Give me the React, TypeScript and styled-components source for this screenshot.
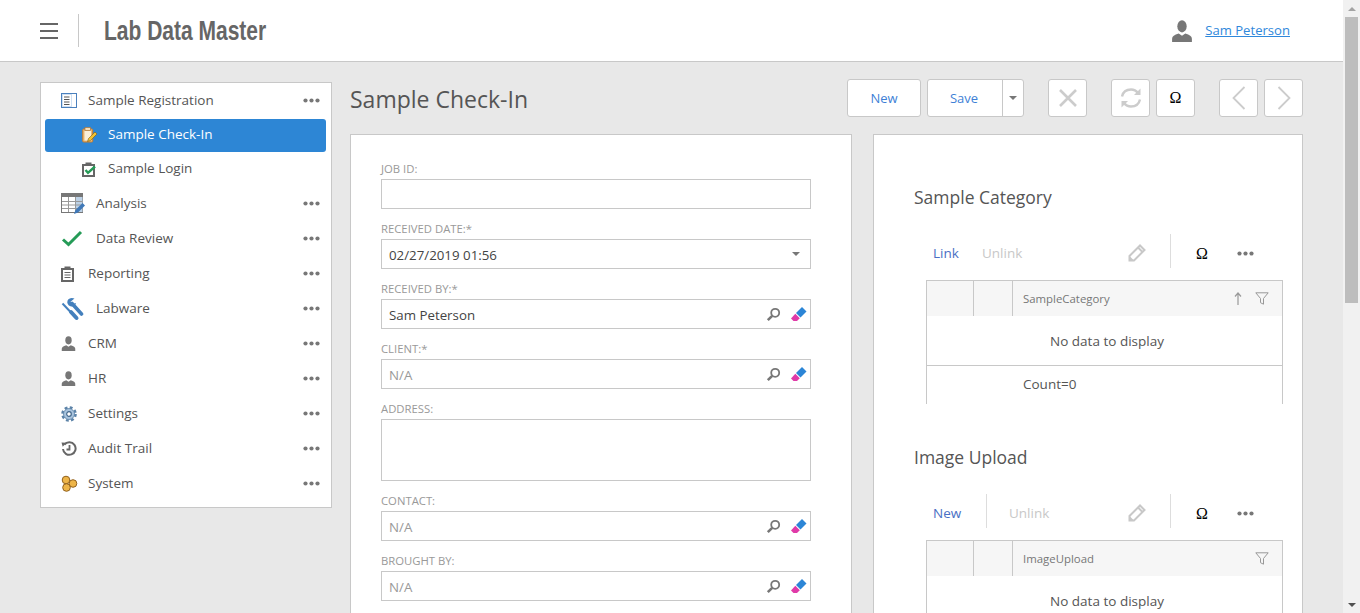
import React from "react";
import styled, {createGlobalStyle, css} from "styled-components";

const GlobalStyle = createGlobalStyle`
  html, body {
    margin: 0;
    height: 100%;
    overflow: hidden;
    font-family: "Open Sans", "Noto Sans", "Liberation Sans", sans-serif;
    font-size: 14px;
    color: #555;
  }

  * {
    box-sizing: border-box;
  }
`

const Omega = styled.span`
  font-family: "Liberation Serif", serif;
  font-size: 16px;
  font-weight: 400;
  color: #000;
`

const Dots = () => (
    <svg width="17" height="5" viewBox="0 0 17 5">
        <circle cx="2.5" cy="2.5" r="2.1" fill="#777"/>
        <circle cx="8.5" cy="2.5" r="2.1" fill="#777"/>
        <circle cx="14.5" cy="2.5" r="2.1" fill="#777"/>
    </svg>
)

const PersonIcon = ({size = 15}: { size?: number }) => (
    <svg width={size} height={size} viewBox="0 0 16 16">
        <ellipse cx="8" cy="4.6" rx="3.4" ry="4.4" fill="#777"/>
        <path d="M.8 16v-2.4c0-1.8 1.6-2.8 4.8-3.8L8 11.4l2.4-1.600c3.200 1 4.800 2 4.800 3.800V16z" fill="#777"/>
    </svg>
)

const icons: Record<string, React.ReactNode> = {
    registration: (
        <svg width="16" height="16" viewBox="0 0 16 16">
            <rect x=".5" y=".5" width="15" height="14" fill="#cfe0f2" stroke="#4a80bd"/>
            <rect x="2" y="2" width="8" height="11" fill="#fff"/>
            <rect x="11" y="1" width="4" height="13" fill="#fff"/>
            <path d="M3 4h5.500M3 6.500h5.500M3 9h5.500M3 11.500h5.500" stroke="#555"/>
        </svg>
    ),
    checkIn: (
        <svg width="16" height="16" viewBox="0 0 16 16">
            <rect x=".7" y="2" width="10" height="13" rx="1" fill="#e8b878" stroke="#c77f2e"/>
            <rect x="3" y=".5" width="5.500" height="3" fill="#f4ddb8" stroke="#a9763a" strokeWidth=".7"/>
            <rect x="2.500" y="4" width="6.500" height="9.500" fill="#f9efd9"/>
            <path d="M5.500 14.500l1-3 6.500-6.500 2 2-6.500 6.500z" fill="#f2c230" stroke="#7a5a1a" strokeWidth=".6"/>
        </svg>
    ),
    login: (
        <svg width="14" height="15" viewBox="0 0 14 15">
            <path d="M1 3h11v11H1z" fill="#fff" stroke="#666" strokeWidth="2"/>
            <rect x="3.500" y=".5" width="6" height="3" fill="#666"/>
            <path d="M3.500 8l2.500 2.800L13 4.500" fill="none" stroke="#259b57" strokeWidth="2.400"/>
        </svg>
    ),
    analysis: (
        <svg width="25" height="22" viewBox="0 0 25 22">
            <rect x=".5" y=".5" width="21" height="19" fill="#fff" stroke="#777"/>
            <rect x="1" y="1" width="20" height="3" fill="#777"/>
            <rect x="15" y="4" width="6.500" height="15" fill="#bcd1e6"/>
            <path d="M1 8.500h20M1 12h20M1 15.500h20M7.500 4v15M14.500 4v15" stroke="#999"/>
            <path d="M13 21l1.500-4 7-7 2.500 2.500-7 7z" fill="#3f78b8"/>
        </svg>
    ),
    review: (
        <svg width="22" height="17" viewBox="0 0 22 17">
            <path d="M2 9.500l5.500 5L20 2" fill="none" stroke="#259b57" strokeWidth="3"/>
        </svg>
    ),
    reporting: (
        <svg width="13" height="16" viewBox="0 0 13 16">
            <path d="M1 3h11v12H1z" fill="#fff" stroke="#666" strokeWidth="2"/>
            <rect x="3.500" y=".5" width="6" height="3" fill="#666"/>
            <path d="M3.500 6.500h6M3.500 9h6M3.500 11.500h6" stroke="#666" strokeWidth="1.200"/>
        </svg>
    ),
    labware: (
        <svg width="23" height="24" viewBox="0 0 23 24">
            <path d="M11 6.500L20.500 17" fill="none" stroke="#4480bd" strokeWidth="3.600" strokeLinecap="round"/>
            <path d="M13.500 1.500c-2.500-1.200-6-.6-7 2.200-.8 2.300.5 4.800 3 5.600 2.600.8 5-.7 5.500-3.300l-3 1-2.500-2.300z" fill="#4480bd"/>
            <path d="M1.500 6.500l8 8.500" fill="none" stroke="#4480bd" strokeWidth="2"/>
            <path d="M10 15l5.500 6" fill="none" stroke="#4480bd" strokeWidth="4" strokeLinecap="round"/>
        </svg>
    ),
    settings: (
        <svg width="16" height="16" viewBox="0 0 16 16">
            <circle cx="8" cy="8" r="6.500" fill="none" stroke="#5c83a8" strokeWidth="2.600" strokeDasharray="2.800 2.300"/>
            <circle cx="8" cy="8" r="5.500" fill="#a8c3dd" stroke="#5c83a8" strokeWidth=".8"/>
            <circle cx="8" cy="8" r="2.300" fill="#fff" stroke="#44688c" strokeWidth="1.200"/>
        </svg>
    ),
    audit: (
        <svg width="16" height="16" viewBox="0 0 16 16">
            <path d="M3.400 3.500A6.300 6.300 0 1 1 2 8" fill="none" stroke="#666" strokeWidth="2"/>
            <path d="M.5 1.500l5 .3-3.800 4z" fill="#666"/>
            <path d="M8.500 4v4.500H5.500" fill="none" stroke="#666" strokeWidth="1.800"/>
        </svg>
    ),
    system: (
        <svg width="17" height="17" viewBox="0 0 17 17">
            <circle cx="5" cy="5" r="3.800" fill="#eeb548" stroke="#91601c"/>
            <circle cx="12" cy="8.500" r="3.800" fill="#eeb548" stroke="#91601c"/>
            <circle cx="5.500" cy="12.500" r="3.800" fill="#eeb548" stroke="#91601c"/>
        </svg>
    ),
}

const navItems = [
    {label: "Sample Registration", icon: icons.registration, height: 35, textAt: 47, lift: 2},
    {label: "Sample Check-In", icon: icons.checkIn, height: 33, textAt: 67, child: true, active: true, lift: 2},
    {label: "Sample Login", icon: icons.login, height: 34, textAt: 67, child: true},
    {label: "Analysis", icon: icons.analysis, height: 35, textAt: 55},
    {label: "Data Review", icon: icons.review, height: 35, textAt: 55},
    {label: "Reporting", icon: icons.reporting, height: 35, textAt: 47},
    {label: "Labware", icon: icons.labware, height: 35, textAt: 55},
    {label: "CRM", icon: <PersonIcon/>, height: 35, textAt: 47},
    {label: "HR", icon: <PersonIcon/>, height: 35, textAt: 47},
    {label: "Settings", icon: icons.settings, height: 35, textAt: 47},
    {label: "Audit Trail", icon: icons.audit, height: 35, textAt: 47},
    {label: "System", icon: icons.system, height: 35, textAt: 47},
]

const LookupIcons = () => (
    <FieldIcons>
        <svg width="15" height="15" viewBox="0 0 15 15">
            <circle cx="9.200" cy="5.800" r="4" fill="none" stroke="#777" strokeWidth="1.800"/>
            <path d="M6.200 8.800L1.800 13.200" stroke="#777" strokeWidth="2.600"/>
        </svg>
        <svg width="17" height="16" viewBox="0 0 17 16">
            <path d="M6 7l6-6 4.500 4.500-6 6z" fill="#2b85d6"/>
            <path d="M5.300 7.700l4.500 4.500L7 15H3.500L1 12.500z" fill="#e03aa8"/>
        </svg>
    </FieldIcons>
)

const Field: React.FC<{ label: string, value?: string, muted?: boolean, lookup?: boolean, date?: boolean, tall?: boolean }> =
    ({label, value, muted, lookup, date, tall}) => (
        <FieldWrapper>
            <FieldLabel>{label}</FieldLabel>
            <FieldBox $tall={tall}>
                <FieldValue $muted={muted}>{value}</FieldValue>
                {lookup && <LookupIcons/>}
                {date && <Caret/>}
            </FieldBox>
        </FieldWrapper>
    )

const PencilIcon = () => (
    <svg width="18" height="18" viewBox="0 0 18 18">
        <path d="M1.500 16.500v-4.500L12 1.500 16.500 6 6 16.500z" fill="#fff" stroke="#c8c8c8" strokeWidth="2"/>
        <path d="M10 3.500L14.500 8" stroke="#c8c8c8" strokeWidth="2"/>
        <path d="M1.500 16.500v-4.500L6 16.500z" fill="#c8c8c8"/>
    </svg>
)

const FilterIcon = () => (
    <svg width="14" height="13" viewBox="0 0 14 13">
        <path d="M.8.800h12.400L8.500 6.500v5.700l-3-1.500V6.500z" fill="none" stroke="#999"/>
    </svg>
)

const GridSection: React.FC<{ title: string, first: string, divider?: boolean, column: string, sort?: boolean, count?: boolean }> =
    ({title, first, divider, column, sort, count}) => (
        <Section>
            <SectionTitle>{title}</SectionTitle>
            <GridToolbar>
                <GridAction $wide={divider}>{first}</GridAction>
                {divider && <ToolbarDivider/>}
                <GridAction $disabled $wide={divider}>Unlink</GridAction>
                <PencilSlot><PencilIcon/></PencilSlot>
                <ToolbarDivider/>
                <OmegaSlot><Omega>Ω</Omega></OmegaSlot>
                <Dots/>
            </GridToolbar>
            <Grid>
                <GridHead>
                    <HeadCell $width={47}/>
                    <HeadCell $width={39}/>
                    <HeadTitle>{column}</HeadTitle>
                    {sort && (
                        <svg width="10" height="14" viewBox="0 0 10 14">
                            <path d="M5 1v12M2 4.500L5 1l3 3.500" fill="none" stroke="#999" strokeWidth="1.200"/>
                        </svg>
                    )}
                    <FilterSlot><FilterIcon/></FilterSlot>
                </GridHead>
                <NoData>No data to display</NoData>
                {count && <GridFooter>Count=0</GridFooter>}
            </Grid>
        </Section>
    )

const App: React.FC = () => {
    return (
        <>
            <GlobalStyle/>
            <PageFrame>
                <Main>
                    <TopBar>
                        <BurgerButton>
                            <span/><span/><span/>
                        </BurgerButton>
                        <Logo>Lab Data Master</Logo>
                        <UserBox>
                            <PersonIcon size={22}/>
                            <UserLink href="#">Sam Peterson</UserLink>
                        </UserBox>
                    </TopBar>
                    <Content>
                        <NavPanel>
                            {navItems.map(item => (
                                <NavRow key={item.label} $height={item.height} $active={item.active} $lift={item.lift}>
                                    <NavIcon $child={item.child} $textAt={item.textAt}>{item.icon}</NavIcon>
                                    <NavLabel>{item.label}</NavLabel>
                                    {!item.child && <Dots/>}
                                </NavRow>
                            ))}
                        </NavPanel>
                        <Workspace>
                            <HeaderRow>
                                <PageTitle>Sample Check-In</PageTitle>
                                <Toolbar>
                                    <TextButton $width={74}>New</TextButton>
                                    <SplitButton>
                                        <SplitMain>Save</SplitMain>
                                        <SplitArrow><Caret/></SplitArrow>
                                    </SplitButton>
                                    <IconButton $gapLeft={24}>
                                        <svg width="20" height="20" viewBox="0 0 20 20">
                                            <path d="M2 2l16 16M18 2L2 18" stroke="#ccc" strokeWidth="2.600"/>
                                        </svg>
                                    </IconButton>
                                    <IconButton $gapLeft={24}>
                                        <svg width="22" height="22" viewBox="0 0 22 22">
                                            <path d="M2 9.500C3 5 6.500 2.500 11 2.500c3 0 5.500 1.500 7 3.500" fill="none" stroke="#ccc" strokeWidth="2.400"/>
                                            <path d="M20.500 1.500V8h-6.500z" fill="#ccc"/>
                                            <path d="M20 12.500c-1 4.500-4.500 7-9 7-3 0-5.500-1.500-7-3.500" fill="none" stroke="#ccc" strokeWidth="2.400"/>
                                            <path d="M1.500 20.500V14H8z" fill="#ccc"/>
                                        </svg>
                                    </IconButton>
                                    <IconButton $gapLeft={6}><Omega>Ω</Omega></IconButton>
                                    <IconButton $gapLeft={24}>
                                        <svg width="14" height="24" viewBox="0 0 14 24">
                                            <path d="M12.500 1L1.500 12l11 11" fill="none" stroke="#ccc" strokeWidth="1.800"/>
                                        </svg>
                                    </IconButton>
                                    <IconButton $gapLeft={6}>
                                        <svg width="14" height="24" viewBox="0 0 14 24">
                                            <path d="M1.500 1l11 11-11 11" fill="none" stroke="#ccc" strokeWidth="1.800"/>
                                        </svg>
                                    </IconButton>
                                </Toolbar>
                            </HeaderRow>
                            <Columns>
                                <FormCard>
                                    <Field label="JOB ID:"/>
                                    <Field label="RECEIVED DATE:*" value="02/27/2019 01:56" date/>
                                    <Field label="RECEIVED BY:*" value="Sam Peterson" lookup/>
                                    <Field label="CLIENT:*" value="N/A" muted lookup/>
                                    <Field label="ADDRESS:" tall/>
                                    <Field label="CONTACT:" value="N/A" muted lookup/>
                                    <Field label="BROUGHT BY:" value="N/A" muted lookup/>
                                </FormCard>
                                <SideCard>
                                    <GridSection title="Sample Category" first="Link" column="SampleCategory" sort count/>
                                    <GridSection title="Image Upload" first="New" column="ImageUpload" divider/>
                                </SideCard>
                            </Columns>
                        </Workspace>
                    </Content>
                </Main>
                <ScrollBar>
                    <ScrollArrow $up/>
                    <ScrollTrack>
                        <ScrollThumb/>
                    </ScrollTrack>
                    <ScrollArrow/>
                </ScrollBar>
            </PageFrame>
        </>
    );
};

export default App;

const PageFrame = styled.div`
  display: flex;
  height: 613px;
  overflow: hidden;
  background-color: #e8e8e8;
`
const Main = styled.div`
  flex: 1;
  min-width: 0;
  overflow: hidden;
`
const TopBar = styled.header`
  display: flex;
  align-items: center;
  height: 62px;
  padding: 0 53px 0 40px;
  background-color: #fff;
  border-bottom: 1px solid #c8c8c8;
`
const BurgerButton = styled.div`
  display: flex;
  flex-direction: column;
  gap: 5px;
  width: 39px;
  height: 33px;
  padding: 9px 20px 0 0;
  border-right: 1px solid #c8c8c8;

  span {
    display: block;
    height: 2px;
    flex: none;
    background-color: #666;
  }
`
const Logo = styled.div`
  margin-left: 25px;
  font-family: "Liberation Sans", sans-serif;
  font-size: 28px;
  font-weight: 700;
  color: #666;
  white-space: nowrap;
  transform: scaleX(0.75);
  transform-origin: left center;
`
const UserBox = styled.div`
  display: flex;
  align-items: center;
  gap: 12px;
  margin-left: auto;
`
const UserLink = styled.a`
  padding-bottom: 2px;
  font-size: 13.1px;
  color: #2f88db;
`
const Content = styled.div`
  display: flex;
  align-items: flex-start;
  padding: 20px 40px 0;
`
const NavPanel = styled.nav`
  flex: none;
  width: 292px;
  height: 426px;
  padding: 1px 5px 0 4px;
  background-color: #fff;
  border: 1px solid #c8c8c8;
`
const NavRow = styled.div<{ $height: number, $active?: boolean, $lift?: number }>`
  display: flex;
  align-items: center;
  height: ${props => props.$height}px;
  padding: 0 6px ${props => props.$lift || 0}px 0;
  border-radius: 3px;
  color: ${props => props.$active ? "#fff" : "#555"};
  background-color: ${props => props.$active ? "#2d86d5" : "transparent"};
`
const NavIcon = styled.span<{ $child?: boolean, $textAt: number }>`
  display: flex;
  align-items: center;
  flex: none;
  width: ${props => props.$textAt - 4}px;
  padding-left: ${props => props.$child ? 37 : 16}px;
`
const NavLabel = styled.span`
  flex: 1;
  padding-bottom: 2px;
  font-size: 13.5px;
`
const Workspace = styled.div`
  flex: 1;
  min-width: 0;
  margin-left: 18px;
`
const HeaderRow = styled.div`
  display: flex;
  align-items: center;
  justify-content: space-between;
  height: 38px;
  margin: -3px 0 0;
`
const PageTitle = styled.h1`
  margin: 0;
  padding-top: 2px;
  font-size: 23px;
  font-weight: 400;
  color: #555;
`
const Toolbar = styled.div`
  display: flex;
  align-items: center;
`
const buttonBase = css`
  display: flex;
  align-items: center;
  justify-content: center;
  height: 38px;
  background-color: #fff;
  border: 1px solid #c8c8c8;
  border-radius: 3px;
`
const TextButton = styled.div<{ $width: number }>`
  ${buttonBase};
  width: ${props => props.$width}px;
  font-size: 13px;
  color: #3e7fd6;
`
const SplitButton = styled.div`
  ${buttonBase};
  width: 97px;
  margin-left: 6px;
  justify-content: flex-start;
`
const SplitMain = styled.span`
  width: 75px;
  height: 100%;
  padding-right: 2px;
  line-height: 36px;
  text-align: center;
  font-size: 13px;
  color: #3e7fd6;
  border-right: 1px solid #c8c8c8;
`
const SplitArrow = styled.span`
  display: flex;
  flex: 1;
  justify-content: center;
`
const IconButton = styled.div<{ $gapLeft: number }>`
  ${buttonBase};
  width: 39px;
  margin-left: ${props => props.$gapLeft}px;
`
const Caret = styled.span`
  width: 0;
  height: 0;
  border-left: 4px solid transparent;
  border-right: 4px solid transparent;
  border-top: 4px solid #777;
`
const Columns = styled.div`
  display: flex;
  gap: 21px;
  margin-top: 17px;
`
const FormCard = styled.div`
  flex: none;
  width: 502px;
  height: 600px;
  padding: 26px 40px 0 30px;
  background-color: #fff;
  border: 1px solid #c8c8c8;
`
const FieldWrapper = styled.div`
  margin-bottom: 12px;
`
const FieldLabel = styled.div`
  height: 18px;
  font-size: 11.3px;
  line-height: 16px;
  color: #999;
`
const FieldBox = styled.div<{ $tall?: boolean }>`
  display: flex;
  align-items: center;
  height: ${props => props.$tall ? 62 : 30}px;
  padding: 0 10px 0 7px;
  border: 1px solid #c8c8c8;
`
const FieldValue = styled.span<{ $muted?: boolean }>`
  flex: 1;
  padding-top: 2px;
  font-size: 13.3px;
  color: ${props => props.$muted ? "#999" : "#444"};
`
const FieldIcons = styled.span`
  display: flex;
  align-items: center;
  gap: 9px;
  margin-right: -7px;
`
const SideCard = styled.div`
  flex: 1;
  min-width: 0;
  height: 600px;
  padding: 50px 19px 0 40px;
  background-color: #fff;
  border: 1px solid #c8c8c8;
`
const Section = styled.section`
  margin-bottom: 41px;
`
const SectionTitle = styled.h2`
  margin: 0;
  height: 36px;
  font-size: 17.5px;
  font-weight: 400;
  color: #555;
`
const GridToolbar = styled.div`
  display: flex;
  align-items: center;
  height: 34px;
  margin-top: 13px;
  padding: 4px 29px 0 19px;
`
const GridAction = styled.span<{ $disabled?: boolean, $wide?: boolean }>`
  width: ${props => props.$wide ? 53 : 49}px;
  font-size: 13.5px;
  color: ${props => props.$disabled ? "#c8c8c8" : "#4a6fc4"};
`
const ToolbarDivider = styled.span`
  flex: none;
  width: 1px;
  height: 34px;
  margin: -4px 22px 0 0;
  background-color: #ddd;
`
const PencilSlot = styled.span`
  display: flex;
  justify-content: flex-end;
  flex: 1;
  padding-right: 24px;
`
const OmegaSlot = styled.span`
  width: 44px;
  padding-left: 3px;
`
const Grid = styled.div`
  margin: 12px 0 0 12px;
  border: 1px solid #c8c8c8;
  border-bottom: none;
`
const GridHead = styled.div`
  display: flex;
  align-items: center;
  height: 35px;
  padding-right: 13px;
  background-color: #f6f6f6;
`
const HeadCell = styled.span<{ $width: number }>`
  align-self: stretch;
  width: ${props => props.$width}px;
  border-right: 1px solid #c8c8c8;
`
const HeadTitle = styled.span`
  flex: 1;
  padding-left: 10px;
  font-size: 11.4px;
  color: #777;
`
const FilterSlot = styled.span`
  display: flex;
  margin-left: 12px;
`
const NoData = styled.div`
  height: 49px;
  padding-left: 5px;
  line-height: 50px;
  text-align: center;
  font-size: 13.5px;
  color: #555;
`
const GridFooter = styled.div`
  height: 39px;
  padding: 9px 0 0 96px;
  font-size: 13.5px;
  color: #555;
  border-top: 1px solid #c8c8c8;
`
const ScrollBar = styled.aside`
  display: flex;
  flex-direction: column;
  flex: none;
  width: 17px;
  background-color: #f1f1f1;
`
const ScrollArrow = styled.span<{ $up?: boolean }>`
  display: flex;
  align-items: center;
  justify-content: center;
  flex: none;
  height: 17px;

  &::before {
    content: "";
    border-left: 4px solid transparent;
    border-right: 4px solid transparent;
    ${props => props.$up ? "border-bottom: 4px solid #a3a3a3;" : "border-top: 4px solid #505050;"}
  }
`
const ScrollTrack = styled.div`
  flex: 1;
`
const ScrollThumb = styled.div`
  height: 286px;
  margin: 0 2px;
  background-color: #bdbdbd;
`
